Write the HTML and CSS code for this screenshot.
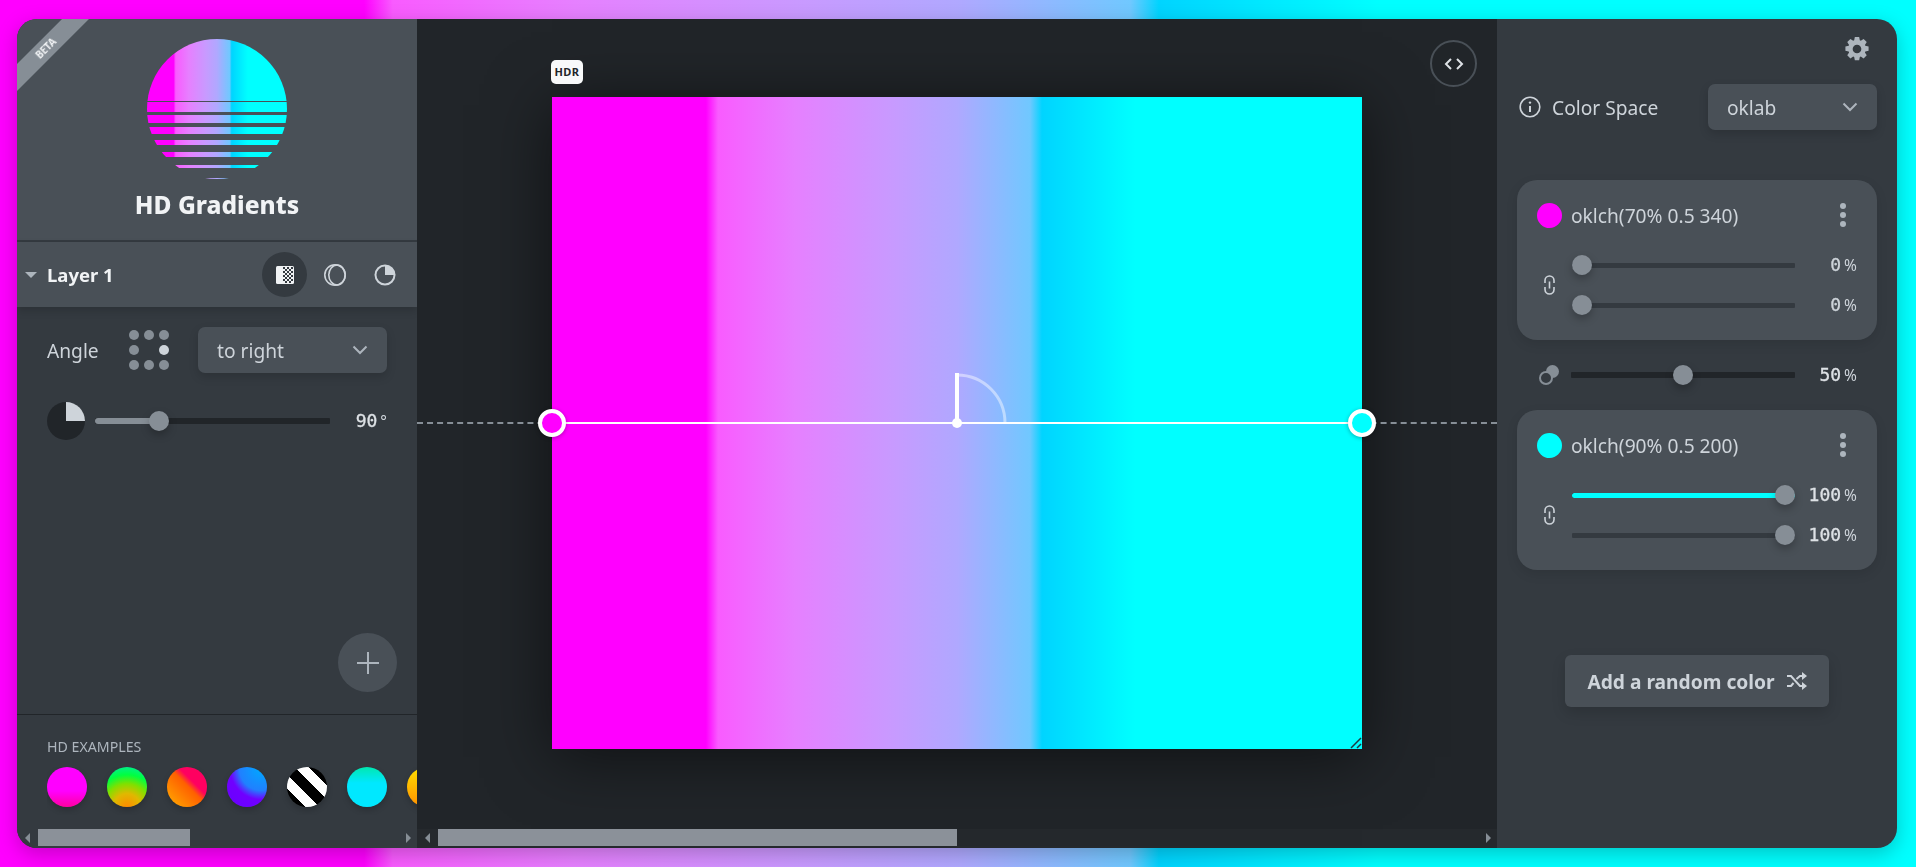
FILE: index.html
```html
<!DOCTYPE html>
<html lang="en">
<head>
<meta charset="utf-8">
<title>HD Gradients</title>
<link rel="stylesheet" href="styles.css">
</head>
<body>
<main class="window">
  <aside class="left">
    <header class="brand">
      <div class="ribbon">BETA</div>
      <svg class="logo" width="140" height="140" viewBox="0 0 140 140">
        <defs>
          <linearGradient id="lg" x1="0" x2="1" y1="0" y2="0">
            <stop offset="0.19" stop-color="#ff00ff"/><stop offset="0.205" stop-color="#f95bff"/>
            <stop offset="0.3" stop-color="#e680ff"/><stop offset="0.42" stop-color="#c89aff"/>
            <stop offset="0.5" stop-color="#b0a8ff"/><stop offset="0.59" stop-color="#70c8ff"/>
            <stop offset="0.605" stop-color="#00d4ff"/><stop offset="0.72" stop-color="#00ffff"/>
          </linearGradient>
          <clipPath id="sun"><circle cx="70" cy="70" r="70"/></clipPath>
        </defs>
        <g clip-path="url(#sun)" fill="url(#lg)">
          <rect x="0" y="0" width="140" height="62"/>
          <rect x="0" y="63" width="140" height="10"/>
          <rect x="0" y="76" width="140" height="8"/>
          <rect x="0" y="88" width="140" height="7"/>
          <rect x="0" y="101" width="140" height="5"/>
          <rect x="0" y="113" width="140" height="5"/>
          <rect x="0" y="126" width="140" height="3"/>
          <rect x="0" y="139" width="140" height="1"/>
        </g>
      </svg>
      <h1 class="title">HD Gradients</h1>
    </header>

    <div class="layer-row">
      <span class="caret"></span>
      <span class="layer-name">Layer 1</span>
      <div class="layer-tools">
        <button class="tool active">
          <svg width="20" height="20" viewBox="0 0 20 20"><rect x="1" y="1" width="18" height="18" rx="1.5" fill="#f1f3f5"/>
            <g fill="#343a40"><rect x="8" y="2" width="2" height="2"/><rect x="12" y="2" width="2" height="2"/><rect x="16" y="2" width="2" height="2"/><rect x="10" y="4" width="2" height="2"/><rect x="14" y="4" width="2" height="2"/><rect x="8" y="6" width="2" height="2"/><rect x="12" y="6" width="2" height="2"/><rect x="16" y="6" width="2" height="2"/><rect x="10" y="8" width="2" height="2"/><rect x="14" y="8" width="2" height="2"/><rect x="8" y="10" width="2" height="2"/><rect x="12" y="10" width="2" height="2"/><rect x="16" y="10" width="2" height="2"/><rect x="10" y="12" width="2" height="2"/><rect x="14" y="12" width="2" height="2"/><rect x="8" y="14" width="2" height="2"/><rect x="12" y="14" width="2" height="2"/><rect x="16" y="14" width="2" height="2"/><rect x="10" y="16" width="2" height="2"/><rect x="14" y="16" width="2" height="2"/></g></svg>
        </button>
        <button class="tool">
          <svg width="24" height="24" viewBox="0 0 24 24" fill="none" stroke="#ced4da" stroke-width="1.6"><circle cx="12" cy="12" r="10.2"/><ellipse cx="14" cy="12" rx="8.2" ry="10"/></svg>
        </button>
        <button class="tool">
          <svg width="22" height="22" viewBox="0 0 22 22"><circle cx="11" cy="11" r="9.5" fill="none" stroke="#ced4da" stroke-width="2"/><path d="M11 11V1.5A9.5 9.5 0 0 1 20.5 11Z" fill="#ced4da"/></svg>
        </button>
      </div>
    </div>

    <section class="controls">
      <div class="angle-row">
        <label class="label">Angle</label>
        <div class="dots">
          <i></i><i></i><i></i><i></i><b></b><i class="on"></i><i></i><i></i><i></i>
        </div>
        <div class="select angle-select">
          <span>to right</span>
          <svg class="chev" width="16" height="10" viewBox="0 0 16 10" fill="none" stroke="#adb5bd" stroke-width="2"><path d="M1.5 1.5 8 8l6.5-6.5"/></svg>
        </div>
      </div>
      <div class="angle-slider">
        <svg width="38" height="38" viewBox="0 0 38 38"><circle cx="19" cy="19" r="19" fill="#212529"/><path d="M19 19V0A19 19 0 0 1 38 19Z" fill="#ced4da"/></svg>
        <div class="slider dark angle-track"><span class="fill gray" style="width:27%"></span><span class="thumb" style="--p:.25"></span></div>
        <div class="val bright">90<small>°</small></div>
      </div>
      <div class="add-wrap">
        <button class="add">
          <svg width="22" height="22" viewBox="0 0 22 22" stroke="#adb5bd" stroke-width="2"><path d="M11 0v22M0 11h22"/></svg>
        </button>
      </div>
    </section>

    <section class="examples">
      <h2 class="ex-title">HD EXAMPLES</h2>
      <div class="swatches">
        <span class="sw s1"></span><span class="sw s2"></span><span class="sw s3"></span><span class="sw s4"></span><span class="sw s5"></span><span class="sw s6"></span><span class="sw s7"></span>
      </div>
    </section>

    <div class="scrollbar sb-left">
      <span class="arrow-l"></span>
      <span class="sb-track"><span class="sb-thumb"></span></span>
      <span class="arrow-r"></span>
    </div>
  </aside>

  <section class="center">
    <div class="stage">
      <button class="code">
        <svg width="20" height="12" viewBox="0 0 20 12" fill="none" stroke="#dee2e6" stroke-width="2"><path d="M7 1 2 6l5 5M13 1l5 5-5 5"/></svg>
      </button>
      <div class="canvas">
        <span class="hdr">HDR</span>
        <span class="dash"></span>
        <span class="axis"></span>
        <span class="handle h-start"></span>
        <span class="handle h-end"></span>
        <svg class="dial" width="60" height="60" viewBox="0 0 60 60" fill="none">
          <path d="M7 6A48 48 0 0 1 55 54" stroke="#fff" stroke-opacity=".45" stroke-width="3"/>
          <path d="M7 4V54" stroke="#fff" stroke-width="4"/>
          <circle cx="7" cy="54" r="5" fill="#fff"/>
        </svg>
        <svg class="grip" width="12" height="12" viewBox="0 0 12 12" stroke="#1f3a40" stroke-width="1.5"><path d="M1 11 11 1M7 11l4-4"/></svg>
      </div>
    </div>
    <div class="scrollbar sb-center">
      <span class="arrow-l"></span>
      <span class="sb-track"><span class="sb-thumb"></span></span>
      <span class="arrow-r"></span>
    </div>
  </section>

  <aside class="right">
    <div class="gear-row">
      <svg width="26" height="26" viewBox="0 0 24 24" fill="#adb5bd"><path fill-rule="evenodd" d="M10 1h4l.6 3 .9.4 2.6-1.7 2.9 2.9-1.7 2.6.4.9 3 .6v4l-3 .6-.4.9 1.7 2.6-2.9 2.9-2.6-1.7-.9.4-.6 3h-4l-.6-3-.9-.4-2.6 1.7-2.9-2.9 1.7-2.6-.4-.9-3-.6v-4l3-.6.4-.9-1.7-2.6 2.9-2.9 2.6 1.7.9-.4ZM12 8a4 4 0 1 0 0 8 4 4 0 0 0 0-8Z"/></svg>
    </div>
    <div class="space-row">
      <svg width="22" height="22" viewBox="0 0 22 22" fill="none" stroke="#ced4da" stroke-width="1.6"><circle cx="11" cy="11" r="9.8"/><path d="M11 10v6" stroke-width="2"/><circle cx="11" cy="6.6" r="1.2" fill="#ced4da" stroke="none"/></svg>
      <span class="label space-label">Color Space</span>
      <div class="select space-select">
        <span>oklab</span>
        <svg class="chev" width="16" height="10" viewBox="0 0 16 10" fill="none" stroke="#adb5bd" stroke-width="2"><path d="M1.5 1.5 8 8l6.5-6.5"/></svg>
      </div>
    </div>

    <article class="card">
      <div class="card-head">
        <span class="color c-mag"></span>
        <span class="color-name">oklch(70% 0.5 340)</span>
        <span class="kebab"><i></i><i></i><i></i></span>
      </div>
      <div class="card-body">
        <svg class="link" width="11" height="20" viewBox="0 0 11 20" fill="none" stroke="#ced4da" stroke-width="1.6"><path d="M1 8V5.5a4.5 4.5 0 0 1 9 0V8M1 12v2.5a4.5 4.5 0 0 0 9 0V12M5.5 6.5v7"/></svg>
        <div class="pair">
          <div class="pair-row"><div class="slider"><span class="thumb" style="--p:0"></span></div><div class="val">0<small>%</small></div></div>
          <div class="pair-row"><div class="slider"><span class="thumb" style="--p:0"></span></div><div class="val">0<small>%</small></div></div>
        </div>
      </div>
    </article>

    <div class="mix-row">
      <svg width="22" height="22" viewBox="0 0 22 22"><circle cx="14.5" cy="7.5" r="6.5" fill="#868e96"/><circle cx="8" cy="14" r="6" fill="#343a40" stroke="#868e96" stroke-width="2"/></svg>
      <div class="slider dark"><span class="thumb" style="--p:.5"></span></div>
      <div class="val bright">50<small>%</small></div>
    </div>

    <article class="card">
      <div class="card-head">
        <span class="color c-cyan"></span>
        <span class="color-name">oklch(90% 0.5 200)</span>
        <span class="kebab"><i></i><i></i><i></i></span>
      </div>
      <div class="card-body">
        <svg class="link" width="11" height="20" viewBox="0 0 11 20" fill="none" stroke="#ced4da" stroke-width="1.6"><path d="M1 8V5.5a4.5 4.5 0 0 1 9 0V8M1 12v2.5a4.5 4.5 0 0 0 9 0V12M5.5 6.5v7"/></svg>
        <div class="pair">
          <div class="pair-row"><div class="slider"><span class="fill cyan" style="width:100%"></span><span class="thumb" style="--p:1"></span></div><div class="val bright">100<small>%</small></div></div>
          <div class="pair-row"><div class="slider"><span class="thumb" style="--p:1"></span></div><div class="val bright">100<small>%</small></div></div>
        </div>
      </div>
    </article>

    <div class="random-wrap">
      <button class="random">Add a random color
        <svg width="20" height="18" viewBox="0 0 20 18" fill="none" stroke="#ced4da" stroke-width="2"><path d="M0 4h4l9 10h3M0 14h4l2.5-3M9.5 7 13 4h3"/><path d="M15 0l5 4-5 4ZM15 10l5 4-5 4Z" fill="#ced4da" stroke="none"/></svg>
      </button>
    </div>
  </aside>
</main>
</body>
</html>
```
FILE: styles.css
```css
* { box-sizing: border-box; }
html, body { margin: 0; height: 100%; }
body {
  padding: 19px 19px 19px 17px;
  overflow: hidden;
  font-family: "Noto Sans", "Liberation Sans", sans-serif;
  color: #ced4da;
  background: linear-gradient(to right, #ff00ff 19%, #f95bff 20.5%, #e680ff 30%, #c89aff 42%, #b0a8ff 50%, #70c8ff 59%, #00d4ff 60.5%, #00ffff 72%);
}
button { font: inherit; color: inherit; border: 0; padding: 0; background: none; }
h1, h2 { margin: 0; }

.window {
  display: grid;
  grid-template-columns: 400px 1080px 400px;
  height: 829px;
  border-radius: 20px;
  overflow: hidden;
  filter: drop-shadow(0 6px 10px rgba(0,0,0,.22));
}

/* left panel */
.left { display: flex; flex-direction: column; background: #343a40; min-height: 0; overflow: hidden; }
.brand {
  position: relative;
  height: 223px;
  padding-top: 20px;
  display: flex;
  flex-direction: column;
  align-items: center;
  background: #495057;
  border-bottom: 2px solid #343a40;
  overflow: hidden;
}
.ribbon {
  position: absolute;
  left: -31px;
  top: 19.5px;
  width: 120px;
  height: 19px;
  line-height: 19px;
  text-align: center;
  font-size: 10px;
  font-weight: 700;
  color: #f1f3f5;
  background: #868e96;
  transform: rotate(-45deg);
}
.logo { display: block; flex: none; }
.title { margin-top: 9px; font-size: 24.5px; line-height: 33px; font-weight: 800; color: #f1f3f5; }

.layer-row {
  height: 65px;
  flex: none;
  display: flex;
  align-items: center;
  padding-left: 8px;
  background: #495057;
  box-shadow: 0 4px 8px rgba(0,0,0,.15);
  position: relative;
}
.caret { width: 0; height: 0; border: 6px solid transparent; border-top: 6px solid #adb5bd; border-bottom: 0; margin-right: 10px; }
.layer-name { font-size: 18.5px; font-weight: 700; color: #f1f3f5; }
.layer-tools { margin-left: auto; padding-right: 10px; display: flex; gap: 5px; align-items: center; }
.tool { width: 45px; height: 45px; border-radius: 50%; display: flex; align-items: center; justify-content: center; }
.tool.active { background: #343a40; }

.controls { flex: 1; min-height: 0; display: flex; flex-direction: column; padding: 20px 30px 22px; }
.angle-row { display: flex; align-items: center; height: 46px; }
.label { font-size: 19.2px; line-height: 24px; padding-top: 2px; color: #ced4da; }
.dots { display: grid; grid-template-columns: repeat(3, 10px); grid-auto-rows: 10px; gap: 5px; margin-left: 30px; flex: none; }
.dots i { border-radius: 50%; background: #868e96; }
.dots i.on { background: #ced4da; }
.select {
  display: flex;
  align-items: center;
  justify-content: space-between;
  height: 46px;
  border-radius: 7px;
  background: #495057;
  box-shadow: 0 4px 10px rgba(0,0,0,.15);
  font-size: 19.2px;
  padding: 0 19px;
  color: #ced4da;
}
.angle-select { width: 189px; margin-left: auto; }
.angle-slider { display: flex; align-items: center; margin-top: 29px; height: 38px; }
.angle-track { width: 235px; margin-left: 10px; }
.slider { position: relative; flex: none; height: 5px; background: #343a40; border-radius: 1px; }
.slider.dark { background: #212529; height: 6px; }
.fill { position: absolute; left: 0; top: 0; bottom: 0; border-radius: 3px; }
.fill.gray { background: #868e96; }
.fill.cyan { background: #00ffff; }
.thumb {
  position: absolute;
  top: 50%;
  left: calc(var(--p) * (100% - 20px));
  width: 20px;
  height: 20px;
  margin-top: -10px;
  border-radius: 50%;
  background: #868e96;
  box-shadow: 0 4px 8px rgba(0,0,0,.25);
}
.val {
  margin-left: auto;
  font-family: "DejaVu Sans Mono", "Liberation Mono", monospace;
  font-size: 18px;
  line-height: 20px;
  color: #ced4da;
  -webkit-text-stroke: .3px currentColor;
  text-align: right;
  white-space: nowrap;
}
.val.bright { color: #dee2e6; }
.val small { font-size: 15.5px; margin-left: 3px; font-family: "Noto Sans", sans-serif; color: #ced4da; -webkit-text-stroke: 0; }
.add-wrap { margin-top: auto; display: flex; justify-content: flex-end; margin-right: -10px; }
.add { width: 59px; height: 59px; border-radius: 50%; background: #495057; display: flex; align-items: center; justify-content: center; }

.examples { flex: none; height: 115px; border-top: 1px solid #212529; padding: 22px 0 0 30px; }
.ex-title { font-size: 14.2px; line-height: 20px; font-weight: 400; color: #adb5bd; }
.swatches { display: flex; gap: 20px; margin-top: 10px; overflow: hidden; padding-bottom: 8px; }
.sw { flex: none; width: 40px; height: 40px; border-radius: 50%; box-shadow: 0 3px 6px rgba(0,0,0,.2); }
.s1 { background: linear-gradient(#ff00ff 60%, #ff00a0); }
.s2 { background: radial-gradient(circle at 50% 100%, #ff8a00 0, #e0b800 30%, #80e000 52%, #00ff40 72%, #00e8b0 100%); }
.s3 { background: linear-gradient(45deg, #ffb000, #ff6000 52%, #ff0060 64%); }
.s4 { background: radial-gradient(circle at 85% 5%, #00a8ff 0, #2080ff 42%, #7000ff 60%, #6800ff); }
.s5 { background: repeating-linear-gradient(45deg, #000 3.3px, #000 13.3px, #fff 13.3px, #fff 23.3px); }
.s6 { background: linear-gradient(#00e8b0, #00e8ff 40%); }
.s7 { background: linear-gradient(#ffe000, #ff9000); }

.scrollbar { flex: none; height: 19px; display: flex; align-items: center; padding-bottom: 2px; }
.sb-track { flex: 1; height: 17px; position: relative; display: block; }
.sb-thumb { position: absolute; top: 0; bottom: 0; background: #8b9199; }
.arrow-l, .arrow-r { flex: none; width: 0; height: 0; border: 5px solid transparent; }
.arrow-l { border-right: 5px solid #868e96; border-left: 0; }
.arrow-r { border-left: 5px solid #868e96; border-right: 0; }
.sb-left { padding-left: 8px; padding-right: 6px; background: #343a40; }
.sb-left .sb-track { margin: 0 8px; }
.sb-left .sb-thumb { left: 0; width: 152px; }
.sb-center { padding-left: 8px; padding-right: 6px; background: #25292d; }
.sb-center .sb-track { margin: 0 8px; }
.sb-center .sb-thumb { left: 0; width: 519px; }

/* center */
.center { display: flex; flex-direction: column; background: #212529; min-width: 0; overflow: hidden; }
.stage { position: relative; flex: 1; min-height: 0; padding: 78px 0 0 135px; }
.code {
  position: absolute;
  left: 1013px;
  top: 21px;
  width: 47px;
  height: 47px;
  border: 2px solid #495057;
  border-radius: 50%;
  display: flex;
  align-items: center;
  justify-content: center;
}
.canvas {
  position: relative;
  width: 810px;
  height: 652px;
  background: linear-gradient(to right, #ff00ff 19%, #f95bff 20.5%, #e680ff 30%, #c89aff 42%, #b0a8ff 50%, #70c8ff 59%, #00d4ff 60.5%, #00ffff 72%);
  box-shadow: 0 8px 60px rgba(0,0,0,.55);
}
.hdr {
  position: absolute;
  left: -1px;
  top: -37px;
  width: 32px;
  height: 24px;
  border-radius: 5px;
  background: #f8f9fa;
  color: #212529;
  font-size: 11px;
  font-weight: 700;
  line-height: 24px;
  text-align: center;
  letter-spacing: .4px;
}
.dash {
  position: absolute;
  left: -135px;
  width: 1080px;
  top: 325px;
  height: 0;
  border-top: 2px dashed #868e96;
}
.axis { position: absolute; left: 0; right: 0; top: 325px; height: 2px; background: #fff; }
.handle {
  position: absolute;
  top: 312px;
  width: 28px;
  height: 28px;
  margin-left: -14px;
  border-radius: 50%;
  border: 4px solid #fff;
  box-shadow: 0 1px 4px rgba(0,0,0,.3);
}
.h-start { left: 0; background: #ff00ff; }
.h-end { left: 100%; background: #00ffff; }
.dial { position: absolute; left: 398px; top: 272px; }
.grip { position: absolute; right: 0; bottom: 0; }

/* right */
.right { display: flex; flex-direction: column; background: #343a40; padding: 0 20px; min-height: 0; }
.gear-row { display: flex; justify-content: flex-end; padding: 17px 7px 0 0; height: 65px; flex: none; }
.space-row { display: flex; align-items: center; height: 46px; padding-left: 2px; flex: none; }
.space-label { margin-left: 11px; }
.space-select { width: 169px; margin-left: auto; }
.card { flex: none; height: 160px; margin-top: 50px; border-radius: 20px; background: #495057; padding: 20px 20px 0; box-shadow: 0 4px 12px rgba(0,0,0,.1); }
.card-head { display: flex; align-items: center; height: 30px; }
.color { flex: none; width: 25px; height: 25px; border-radius: 50%; }
.c-mag { background: #ff00ff; }
.c-cyan { background: #00ffff; }
.color-name { margin-left: 9px; font-size: 19.2px; color: #ced4da; }
.kebab { margin-left: auto; margin-right: 11px; display: flex; flex-direction: column; gap: 3px; }
.kebab i { width: 6px; height: 6px; border-radius: 50%; background: #adb5bd; }
.card-body { display: flex; align-items: center; margin-top: 25px; }
.link { flex: none; margin-left: 7px; }
.pair { flex: 1; margin-left: 17px; display: flex; flex-direction: column; gap: 20px; }
.pair-row { display: flex; align-items: center; height: 20px; }
.pair-row .slider { width: 223px; }
.mix-row { flex: none; display: flex; align-items: center; height: 20px; margin: 25px 20px 0 21px; }
.mix-row svg { flex: none; }
.mix-row .slider { width: 224px; margin-left: 11px; }
.mix-row + .card { margin-top: 25px; }
.random-wrap { display: flex; justify-content: center; margin-top: 85px; }
.random {
  display: flex;
  align-items: center;
  justify-content: center;
  gap: 12px;
  width: 264px;
  height: 52px;
  border-radius: 6px;
  background: #495057;
  box-shadow: 0 6px 14px rgba(0,0,0,.15);
  font-size: 19.2px;
  font-weight: 700;
  color: #ced4da;
}
```
